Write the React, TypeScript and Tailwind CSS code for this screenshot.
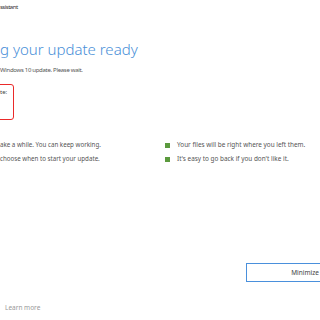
export default function App() {
  return (
    <div
      className="w-[320px] h-[320px] bg-white overflow-hidden flex flex-col"
      style={{ fontFamily: '"Noto Sans", "Open Sans", sans-serif' }}
    >
      <div className="h-[14px] leading-[14px] text-[6px] tracking-[-0.5px] text-[#333] whitespace-nowrap">ssistant</div>
      <div className="mt-[24px] h-[22px] leading-[22px] text-[15px] font-light text-[#4a8fd8] whitespace-nowrap">
        g your update ready
      </div>
      <div className="mt-[5px] h-[10px] leading-[10px] text-[6px] tracking-[-0.3px] text-[#555] whitespace-nowrap">
        Windows 10 update. Please wait.
      </div>
      <div className="mt-[9px] -ml-[10px] w-[24px] h-[36px] shrink-0 border-[1.5px] border-[#ea2a2a] rounded-[3px] pl-[9px] pt-[3px] text-[6px] leading-[8px] text-[#444]">
        te:
      </div>
      <div className="mt-[18px] grid grid-cols-[165px_1fr] text-[6.2px] leading-[14px] text-[#555]">
        <div className="flex flex-col whitespace-nowrap">
          <span>ake a while. You can keep working.</span>
          <span>choose when to start your update.</span>
        </div>
        <div className="flex flex-col whitespace-nowrap">
          <div className="flex items-center gap-[7px]">
            <span className="w-[5px] h-[5px] bg-[#5b9a3e]" />
            <span className="text-[6.4px]">Your files will be right where you left them.</span>
          </div>
          <div className="flex items-center gap-[7px]">
            <span className="w-[5px] h-[5px] bg-[#5b9a3e]" />
            <span className="text-[6.4px]">It's easy to go back if you don't like it.</span>
          </div>
        </div>
      </div>
      <div className="mt-[97px] ml-[246px] w-[118px] h-[19px] shrink-0 border-[1.5px] border-[#4a90dc] flex items-center justify-center text-[6.5px] text-[#444] whitespace-nowrap">
        Minimize
      </div>
      <div className="mt-[21px] ml-[5px] text-[6.5px] leading-[10px] text-[#999] whitespace-nowrap">Learn more</div>
    </div>
  );
}
